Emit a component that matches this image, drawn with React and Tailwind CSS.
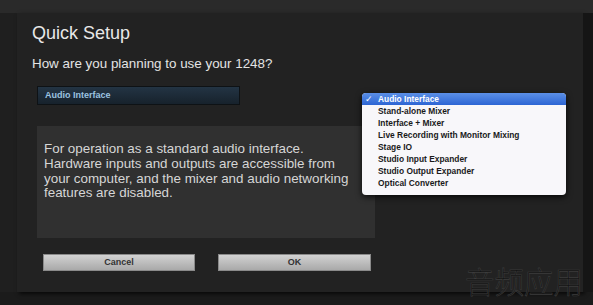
import React from "react";

const items = [
  "Audio Interface",
  "Stand-alone Mixer",
  "Interface + Mixer",
  "Live Recording with Monitor Mixing",
  "Stage IO",
  "Studio Input Expander",
  "Studio Output Expander",
  "Optical Converter",
];

export default function App() {
  return (
    <div className="relative w-[593px] h-[305px] overflow-hidden bg-[#1b1b1b] font-['Liberation_Sans',Arial,sans-serif]">
      <div className="h-[13px] bg-[#2a2a2a]" />
      <div className="flex">
        <div className="w-[17px] h-[279px] bg-[#1f1f1f]" />
        <div className="w-[566px] h-[279px] bg-[#222222] shadow-[2px_2px_4px_rgba(0,0,0,0.7)] flex flex-col pl-[15px]">
          <div className="mt-[9px] text-[18px] leading-[22px] text-[#e8e8e8]">Quick Setup</div>
          <div className="mt-[12px] text-[13.4px] leading-[16px] text-[#e4e4e4]">How are you planning to use your 1248?</div>
          <div className="mt-[14px] ml-[5px] w-[203px] h-[19px] border border-[#0e1215] bg-gradient-to-b from-[#233444] to-[#17222c] flex items-center pl-[7px] text-[9px] font-bold text-[#9cc3e0]">
            Audio Interface
          </div>
          <div className="mt-[21px] ml-[5px] w-[338px] h-[112px] bg-[#303030] pt-[16px] pl-[7px] text-[13.4px] leading-[14.8px] text-[#d6d6d6]">
            For operation as a standard audio interface.<br />
            Hardware inputs and outputs are accessible from<br />
            your computer, and the mixer and audio networking<br />
            features are disabled.
          </div>
          <div className="mt-[16px] ml-[11px] flex gap-[23px]">
            <div className="w-[152px] h-[17px] bg-gradient-to-b from-[#d2d2d2] to-[#a9a9a9] border border-[#8a8a8a] flex items-center justify-center text-[9px] font-bold text-[#333]">
              Cancel
            </div>
            <div className="w-[153px] h-[17px] bg-gradient-to-b from-[#d2d2d2] to-[#a9a9a9] border border-[#8a8a8a] flex items-center justify-center text-[9px] font-bold text-[#333]">
              OK
            </div>
          </div>
        </div>
        <div className="flex-1 bg-[#151515]" />
      </div>

      <div className="absolute left-[362px] top-[93px] w-[204px] h-[102px] bg-[#f8f7fa] rounded-[4px] shadow-[0_2px_6px_rgba(0,0,0,0.8)] overflow-hidden text-[8.4px] font-bold text-[#1a1a1a]">
        {items.map((it, i) => (
          <div
            key={it}
            className={
              i === 0
                ? "h-[12px] leading-[12px] bg-gradient-to-b from-[#5b8fe6] to-[#2d65d4] text-white pl-[3px] flex items-center"
                : "h-[12px] leading-[13px] pl-[16px]"
            }
          >
            {i === 0 && <span className="w-[13px] text-[9px] font-['DejaVu_Sans',sans-serif]">✓</span>}
            {it}
          </div>
        ))}
      </div>

      <div className="absolute left-[465px] top-[263px] text-[29.5px] leading-[34px] text-[#121212] [-webkit-text-stroke:0.6px_#3c3c3c] font-['Noto_Sans_CJK_SC',sans-serif] font-light">
        音频应用
      </div>
    </div>
  );
}
